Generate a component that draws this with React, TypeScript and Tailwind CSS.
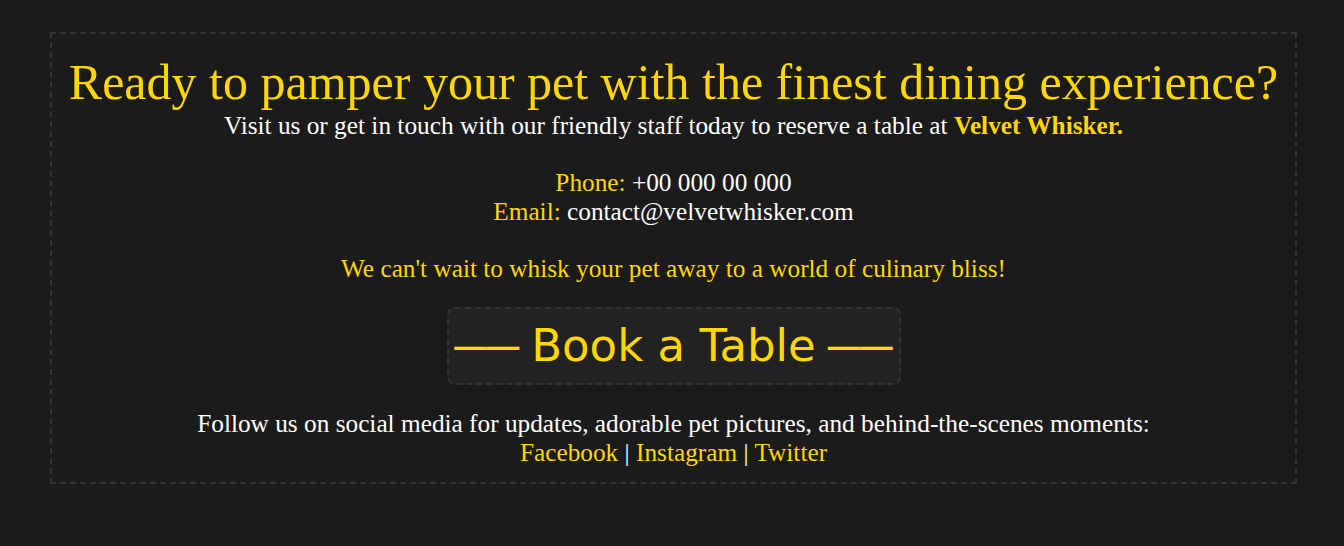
import React from "react";

export default function App() {
  return (
    <div className="min-h-[546px] w-full bg-[#1b1b1b] pt-[32px]">
      <div
        className="ml-[50px] w-[1247px] border-2 border-dashed border-[#333333] text-center pb-[16px]"
        style={{ fontFamily: '"Liberation Serif", "Times New Roman", serif' }}
      >
        <h1 className="mt-[21px] mb-[1.5px] text-[50px] leading-[54px] text-[#ffd700] font-normal">
          Ready to pamper your pet with the finest dining experience?
        </h1>
        <div className="text-[25.3px] leading-[28.8px] text-white">
          <p>
            Visit us or get in touch with our friendly staff today to reserve a table at{" "}
            <strong className="font-bold text-[#ffd700]">Velvet Whisker.</strong>
          </p>
          <p className="mt-[28.8px]">
            <span className="text-[#ffd700]">Phone:</span> +00 000 00 000
            <br />
            <span className="text-[#ffd700]">Email:</span> contact@velvetwhisker.com
          </p>
          <p className="mt-[28.8px] text-[#ffd700]">
            We can't wait to whisk your pet away to a world of culinary bliss!
          </p>
        </div>
        <div className="mt-[23.5px] flex justify-center">
          <a
            href="#"
            className="flex h-[78px] w-[454px] items-center justify-center gap-[12px] rounded-[8px] border-2 border-dashed border-[#333333] bg-[#222222] text-[#ffd700]"
          >
            <span
              className="text-[32.5px] font-bold leading-none"
              style={{ fontFamily: '"Liberation Sans", Arial, sans-serif' }}
            >
              ——
            </span>
            <span className="text-[45px] leading-none" style={{ fontFamily: '"DejaVu Sans", sans-serif' }}>
              Book a Table
            </span>
            <span
              className="text-[32.5px] font-bold leading-none"
              style={{ fontFamily: '"Liberation Sans", Arial, sans-serif' }}
            >
              ——
            </span>
          </a>
        </div>
        <div className="mt-[24px] text-[25.3px] leading-[28.8px] text-white">
          <p>Follow us on social media for updates, adorable pet pictures, and behind-the-scenes moments:</p>
          <p>
            <a href="#" className="text-[#ffd700]">Facebook</a> | <a href="#" className="text-[#ffd700]">Instagram</a> |{" "}
            <a href="#" className="text-[#ffd700]">Twitter</a>
          </p>
        </div>
      </div>
    </div>
  );
}
